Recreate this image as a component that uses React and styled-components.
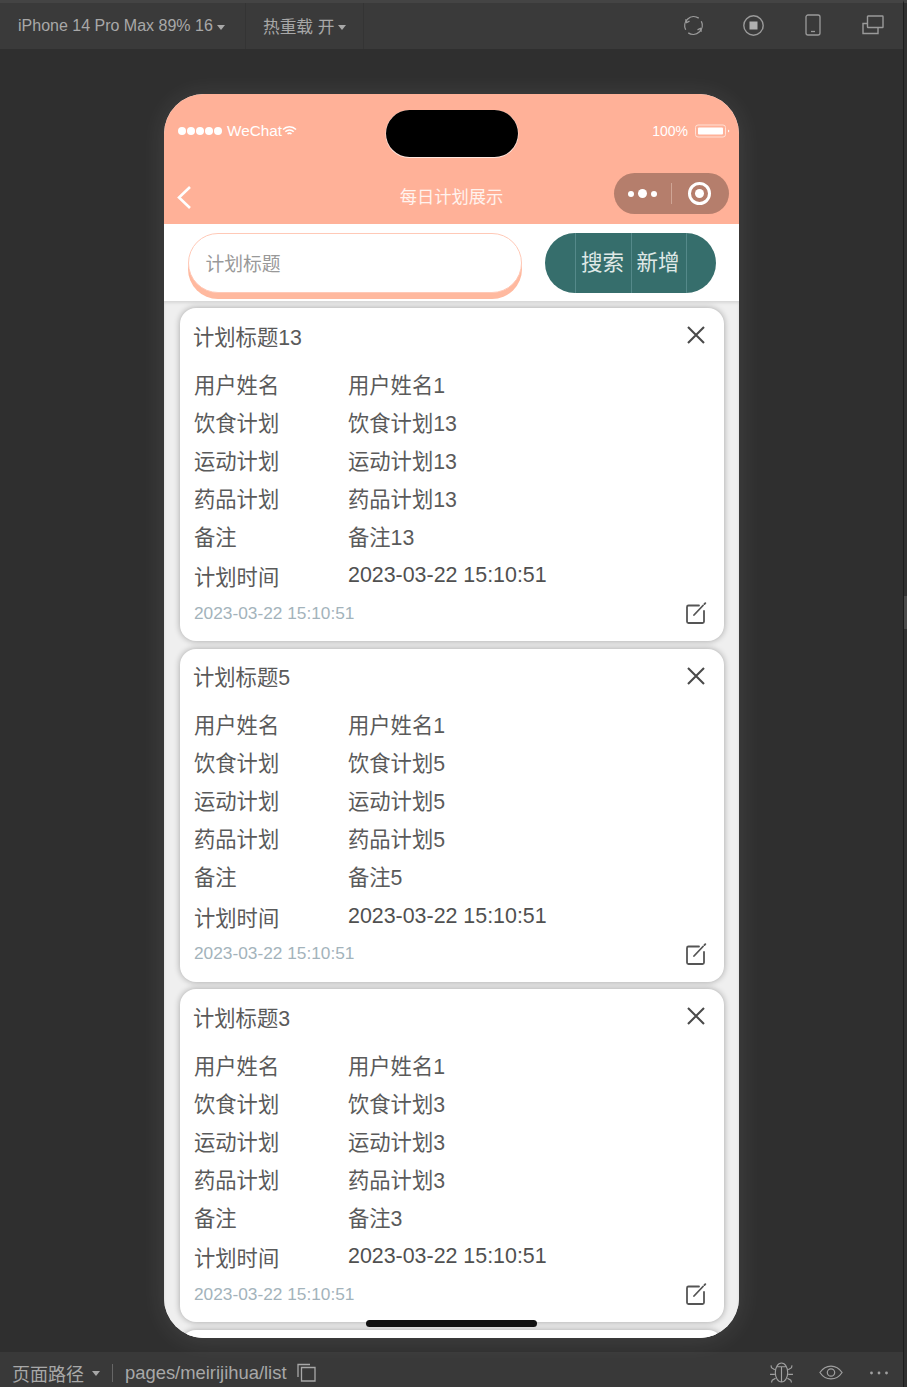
import React from 'react';
import styled, { createGlobalStyle } from 'styled-components';

const GlobalStyle = createGlobalStyle`
  html, body { margin: 0; padding: 0; background: #2f2f2f; }
  body { font-family: "Liberation Sans", "Noto Sans CJK SC", sans-serif; }
  * { box-sizing: border-box; }
`;

const plans = [
  { id: 13, time: '2023-03-22 15:10:51' },
  { id: 5, time: '2023-03-22 15:10:51' },
  { id: 3, time: '2023-03-22 15:10:51' },
];

const Page = styled.div`
  width: 907px;
  height: 1387px;
  display: flex;
  overflow: hidden;
  background: #2f2f2f;
`;

const Main = styled.div`
  width: 903px;
  flex: none;
  display: flex;
  flex-direction: column;
`;

const Rail = styled.div`
  flex: 1;
  padding-top: 593px;
  border-top: 3px solid #444;
  border-left: 1px solid #1d1d1d;
  background: #313131;
`;

const RailThumb = styled.div`
  height: 33px;
  background: #4b4b4b;
`;

const Toolbar = styled.div`
  height: 49px;
  flex: none;
  display: flex;
  align-items: stretch;
  background: #3a3a3a;
  border-top: 3px solid #444;
  color: #a8a8a8;
  font-size: 16px;
`;

const ToolbarItem = styled.div`
  display: flex;
  align-items: center;
  gap: 4px;
  font-size: ${p => p.$size || 16}px;
  width: ${p => p.$width}px;
  padding-left: ${p => p.$left}px;
  border-right: 1px solid #343434;
`;

const Caret = styled.span`
  width: 0;
  height: 0;
  border-left: 4.5px solid transparent;
  border-right: 4.5px solid transparent;
  border-top: 5px solid #a8a8a8;
  margin-top: 2px;
  margin-left: ${p => p.$left || 0}px;
`;

const ToolbarIcons = styled.div`
  margin-left: auto;
  display: flex;
  align-items: center;
  gap: 39px;
  padding: 0 19px 2px 0;
  color: #9a9a9a;
`;

const Stage = styled.div`
  flex: 1;
  min-height: 0;
  padding: 45px 0 0 164px;
`;

const Phone = styled.div`
  position: relative;
  width: 575px;
  height: 1244px;
  display: flex;
  flex-direction: column;
  border-radius: 40px;
  overflow: hidden;
  background: #efefef;
  box-shadow: 0 2px 26px rgba(255, 255, 255, 0.1);
`;

const Header = styled.div`
  flex: none;
  height: 130px;
  display: flex;
  flex-direction: column;
  background: #ffb198;
  color: #fff;
`;

const StatusBar = styled.div`
  height: 71px;
  display: flex;
  align-items: center;
  justify-content: space-between;
  padding: 3px 9px 0 14px;
`;

const StatusGroup = styled.div`
  display: flex;
  align-items: center;
`;

const Dot = styled.span`
  width: 8px;
  height: 8px;
  margin-right: 1px;
  border-radius: 50%;
  background: #fff;
`;

const StatusText = styled.span`
  font-size: ${p => p.$size}px;
  margin-left: ${p => p.$left || 0}px;
  margin-right: ${p => p.$right || 0}px;
`;

const Island = styled.div`
  position: absolute;
  left: 222px;
  top: 16px;
  width: 132px;
  height: 47px;
  border-radius: 24px;
  background: #000;
  box-shadow: 0 0.5px 0.5px 0.5px rgba(255, 255, 255, 0.7);
`;

const NavBar = styled.div`
  position: relative;
  height: 59px;
  display: flex;
  align-items: center;
  justify-content: center;
`;

const NavBack = styled.svg`
  position: absolute;
  left: 13px;
  top: 20px;
`;

const NavTitle = styled.div`
  font-size: 17.3px;
  color: #fff3ee;
  margin-top: 2px;
`;

const Capsule = styled.div`
  position: absolute;
  right: 10px;
  top: 8px;
  width: 115px;
  height: 41px;
  display: flex;
  align-items: center;
  border-radius: 21px;
  background: #b57e6c;
`;

const CapsuleMore = styled.div`
  width: 58px;
  height: 21px;
  display: flex;
  align-items: center;
  justify-content: flex-end;
  gap: 4px;
  padding-right: 14px;
  border-right: 1px solid #cfa595;
`;

const MoreDot = styled.span`
  width: ${p => p.$size}px;
  height: ${p => p.$size}px;
  border-radius: 50%;
  background: #fff;
`;

const CapsuleRecord = styled.div`
  margin-left: 16px;
  width: 23px;
  height: 23px;
  display: flex;
  align-items: center;
  justify-content: center;
  border: 3px solid #fff;
  border-radius: 50%;
  &::after {
    content: '';
    width: 9px;
    height: 9px;
    border-radius: 50%;
    background: #fff;
  }
`;

const SearchRow = styled.div`
  flex: none;
  height: 77px;
  display: flex;
  align-items: flex-start;
  padding: 8.5px 23px 0 23.5px;
  background: #fff;
`;

const SearchInput = styled.div`
  width: 334.5px;
  height: 60px;
  display: flex;
  align-items: center;
  padding-left: 17px;
  border: 1px solid #ffc9b7;
  border-radius: 30px;
  background: #fff;
  box-shadow: 0 6px 0 #ffb99f;
  color: #999;
  font-size: 18.8px;
`;

const ButtonGroup = styled.div`
  width: 171px;
  height: 60px;
  margin: 0.5px 0 0 auto;
  display: flex;
  justify-content: center;
  border-radius: 30px;
  background: #366e6c;
`;

const GroupButton = styled.div`
  width: 56px;
  display: flex;
  align-items: center;
  justify-content: center;
  padding: 0 2px 5px 0;
  border-left: 1px solid #55898a;
  border-right: ${p => (p.$last ? '1px solid #55898a' : 'none')};
  color: #dfe8e6;
  font-size: 21.5px;
  margin-right: ${p => (p.$last ? -1 : 0)}px;
`;

const List = styled.div`
  flex: 1;
  min-height: 0;
  display: flex;
  flex-direction: column;
  gap: 7.5px;
  padding: 7px 15px 0 16px;
  overflow: hidden;
  background: #efefef;
  box-shadow: inset 0 2px 3px rgba(0, 0, 0, 0.1);
`;

const Card = styled.div`
  flex: none;
  height: ${p => (p.$rest ? 40 : 333)}px;
  padding: 0 14px;
  border-radius: 16px;
  background: #fff;
  box-shadow: 0 0 6px rgba(0, 0, 0, 0.32);
  color: #5a5a5a;
  font-size: 21.3px;
`;

const CardTitle = styled.div`
  height: 54px;
  margin-bottom: 2px;
  display: flex;
  align-items: center;
  justify-content: space-between;
  padding-right: 4px;
  text-indent: -1px;
`;

const CardRow = styled.div`
  height: 38.1px;
  margin-top: ${p => p.$top || 0}px;
  display: grid;
  grid-template-columns: 154px 1fr;
  align-items: center;
`;

const CardFooter = styled.div`
  height: 37px;
  display: flex;
  align-items: center;
  justify-content: space-between;
  padding-right: 3px;
  color: #a3b3bb;
  font-size: 17.3px;
`;

const TimeValue = styled.span`
  color: #505050;
  font-size: 21.4px;
`;

const HomeBar = styled.div`
  position: absolute;
  left: 202px;
  bottom: 11px;
  width: 171px;
  height: 7px;
  border-radius: 4px;
  background: #111;
`;

const BottomBar = styled.div`
  height: 35px;
  flex: none;
  display: flex;
  align-items: center;
  padding: 6px 15px 0 12px;
  background: #393939;
  color: #a8a8a8;
  font-size: 18px;
`;

const PathDivider = styled.span`
  width: 1px;
  height: 18px;
  margin: 0 12px 0 12px;
  background: #666;
`;

const PathText = styled.span`
  font-size: 18.4px;
  margin-right: 10px;
`;

const BottomIcons = styled.div`
  margin-left: auto;
  display: flex;
  align-items: center;
  gap: 25px;
  color: #a0a0a0;
`;

const CloseIcon = () => (
  <svg width="20" height="20" viewBox="0 0 20 20" fill="none" stroke="#4a4a4a" strokeWidth="2.1">
    <path d="M2 2l16 16M18 2L2 18" />
  </svg>
);

const EditIcon = () => (
  <svg width="22" height="22" viewBox="0 0 22 22" fill="none" stroke="#555" strokeWidth="1.8" strokeLinecap="round">
    <path d="M14 3.500H3.500A1.500 1.500 0 0 0 2 5v14.500A1.500 1.500 0 0 0 3.500 21h14a1.500 1.500 0 0 0 1.500-1.500V9" />
    <path d="M9 13l9-9.500M19.500 2l.8-.8" />
  </svg>
);

const PlanCard = ({ id, time }) => (
  <Card>
    <CardTitle>
      <span>计划标题{id}</span>
      <CloseIcon />
    </CardTitle>
    <CardRow><span>用户姓名</span><span>用户姓名1</span></CardRow>
    <CardRow><span>饮食计划</span><span>饮食计划{id}</span></CardRow>
    <CardRow><span>运动计划</span><span>运动计划{id}</span></CardRow>
    <CardRow><span>药品计划</span><span>药品计划{id}</span></CardRow>
    <CardRow><span>备注</span><span>备注{id}</span></CardRow>
    <CardRow $top={2}><span>计划时间</span><TimeValue>{time}</TimeValue></CardRow>
    <CardFooter>
      <span>{time}</span>
      <EditIcon />
    </CardFooter>
  </Card>
);

export default function App() {
  return (
    <Page>
      <GlobalStyle />
      <Main>
        <Toolbar>
          <ToolbarItem $width={246} $left={18}>
            iPhone 14 Pro Max 89% 16 <Caret />
          </ToolbarItem>
          <ToolbarItem $width={118} $left={17} $size={16.7}>
            热重载 开 <Caret />
          </ToolbarItem>
          <ToolbarIcons>
            <svg width="21" height="21" viewBox="0 0 22 22" fill="none" stroke="currentColor" strokeWidth="1.400">
              <path d="M2.800 15.500A9.500 9.500 0 0 1 16.500 3.300" />
              <path d="M19.200 6.500A9.500 9.500 0 0 1 5.500 18.700" />
              <path d="M2.800 4.500l1 3.500 3-1.500M19.200 17.500l-1-3.500-3 1.500" />
            </svg>
            <svg width="21" height="21" viewBox="0 0 21 21" fill="none" stroke="currentColor" strokeWidth="1.400">
              <circle cx="10.500" cy="10.500" r="9.700" />
              <rect x="6.500" y="6.500" width="8" height="8" fill="#b0b0b0" stroke="none" />
            </svg>
            <svg width="20" height="22" viewBox="0 0 20 22" fill="none" stroke="currentColor" strokeWidth="1.300">
              <rect x="3" y="1" width="14" height="20" rx="2" />
              <path d="M8 17.500h4" />
            </svg>
            <svg width="22" height="20" viewBox="0 0 22 20" fill="none" stroke="currentColor" strokeWidth="1.400">
              <rect x="5.500" y="1" width="15.500" height="11.500" rx="0.500" />
              <path d="M5 8.500H1V18.500H16V12.500" />
            </svg>
          </ToolbarIcons>
        </Toolbar>

        <Stage>
          <Phone>
            <Header>
              <StatusBar>
                <StatusGroup>
                  <Dot /><Dot /><Dot /><Dot /><Dot />
                  <StatusText $size={15.3} $left={4}>WeChat</StatusText>
                  <svg width="15" height="12" viewBox="0 0 15 12" fill="none" stroke="#fff" strokeWidth="1.500">
                    <path d="M1 4.500a9 9 0 0 1 13 0M3.300 6.800a6 6 0 0 1 8.400 0M5.500 9a3 3 0 0 1 4 0" />
                  </svg>
                </StatusGroup>
                <StatusGroup>
                  <StatusText $size={14} $right={7}>100%</StatusText>
                  <svg width="35" height="14" viewBox="0 0 35 14" fill="none">
                    <rect x="0.500" y="1" width="30" height="12" rx="2.500" stroke="#ffe0d5" />
                    <rect x="3" y="3.500" width="25" height="7" rx="1" fill="#fff" />
                    <path d="M33 5.500l1.500 1.500L33 8.500z" fill="#fff" />
                  </svg>
                </StatusGroup>
              </StatusBar>
              <Island />
              <NavBar>
                <NavBack width="15" height="25" viewBox="0 0 15 25" fill="none" stroke="#fff" strokeWidth="2.600">
                  <path d="M13 2L2 12.500 13 23" />
                </NavBack>
                <NavTitle>每日计划展示</NavTitle>
                <Capsule>
                  <CapsuleMore>
                    <MoreDot $size={6} />
                    <MoreDot $size={9} />
                    <MoreDot $size={6} />
                  </CapsuleMore>
                  <CapsuleRecord />
                </Capsule>
              </NavBar>
            </Header>

            <SearchRow>
              <SearchInput>计划标题</SearchInput>
              <ButtonGroup>
                <GroupButton>搜索</GroupButton>
                <GroupButton $last>新增</GroupButton>
              </ButtonGroup>
            </SearchRow>

            <List>
              {plans.map(plan => (
                <PlanCard key={plan.id} id={plan.id} time={plan.time} />
              ))}
              <Card $rest />
            </List>
            <HomeBar />
          </Phone>
        </Stage>

        <BottomBar>
          页面路径
          <Caret $left={8} />
          <PathDivider />
          <PathText>pages/meirijihua/list</PathText>
          <svg width="19" height="19" viewBox="0 0 19 19" fill="none" stroke="currentColor" strokeWidth="1.300">
            <path d="M1 14V1.500h12" />
            <path d="M4.500 4.500h13.500v13.500H4.500z" />
          </svg>
          <BottomIcons>
            <svg width="25" height="21" viewBox="0 0 26 22" fill="none" stroke="currentColor" strokeWidth="1.200">
              <path d="M13 1c-4 0-6.500 5-6.500 10s2.500 10 6.500 10 6.500-5 6.500-10S17 1 13 1zM13 5v16M8.500 5h9" />
              <path d="M6 8L2.500 6 2 3.500M6 13H1M6.800 17l-3.500 2-.8 2.500M20 8l3.500-2 .5-2.500M20 13h5M19.200 17l3.500 2 .8 2.500" />
            </svg>
            <svg width="24" height="15" viewBox="0 0 26 16" fill="none" stroke="currentColor" strokeWidth="1.300">
              <path d="M1 8c3-4.500 7-7 12-7s9 2.500 12 7c-3 4.500-7 7-12 7S4 12.500 1 8z" />
              <circle cx="13" cy="8" r="4" />
            </svg>
            <svg width="18" height="4" viewBox="0 0 18 4" fill="currentColor" style={{ marginLeft: 2 }}>
              <circle cx="1.500" cy="2" r="1.400" />
              <circle cx="9" cy="2" r="1.400" />
              <circle cx="16.500" cy="2" r="1.400" />
            </svg>
          </BottomIcons>
        </BottomBar>
      </Main>
      <Rail>
        <RailThumb />
      </Rail>
    </Page>
  );
}
